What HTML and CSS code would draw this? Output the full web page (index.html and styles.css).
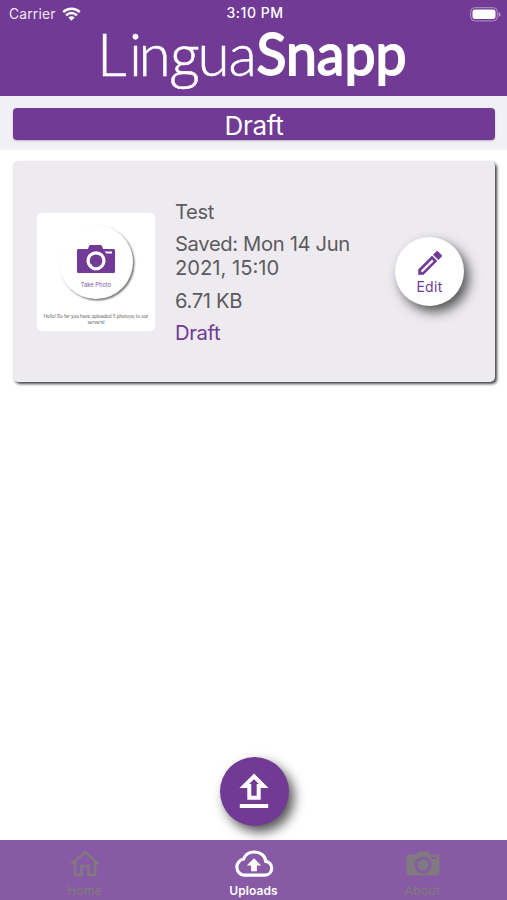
FILE: index.html
```html
<!DOCTYPE html>
<html lang="en">
<head>
<meta charset="utf-8">
<title>LinguaSnapp</title>
<link rel="stylesheet" href="styles.css">
</head>
<body>
<div class="app">
  <header class="header">
    <div class="status">
      <div class="carrier"><span>Carrier</span>
        <svg width="19" height="14" viewBox="0 0 19 14" fill="none" stroke="#fff" stroke-width="2.4"><path d="M1.2 5.1a11.8 11.8 0 0 1 16.6 0"/><path d="M4.1 8.3a7.6 7.6 0 0 1 10.8 0"/><path d="M9.5 13.7 6.4 10.6a4.4 4.4 0 0 1 6.2 0z" fill="#fff" stroke="none"/></svg>
      </div>
      <div class="time">3:10 PM</div>
      <svg class="battery" width="31" height="15" viewBox="0 0 31 15"><rect x=".7" y=".7" width="26.6" height="13.2" rx="4" fill="none" stroke="#b394c8"/><rect x="2.5" y="2.6" width="23" height="9.4" rx="2.2" fill="#fff"/><path d="M28.7 5v5q2-.8 2-2.500t-2-2.500z" fill="#b394c8"/></svg>
    </div>
    <svg class="logo" width="507" height="68" viewBox="0 28 507 68" fill="#fff">
      <text class="light" y="75.500"><tspan x="97">L</tspan><tspan x="129">i</tspan><tspan x="138.500">n</tspan><tspan class="g" x="170.500">g</tspan><tspan x="197.500">u</tspan><tspan x="228.500">a</tspan></text>
      <text class="bold" x="256.500" y="75" textLength="150" lengthAdjust="spacingAndGlyphs">Snapp</text>
    </svg>
  </header>
  <div class="filter"><div class="filter-button">Draft</div></div>
  <main class="content">
    <article class="card">
      <div class="thumb">
        <div class="thumb-circle">
          <svg width="38" height="28" viewBox="0 0 38 28"><path fill="#713a96" d="M1.500 4H11l1-3q.4-1 1.500-1h10q1.100 0 1.500 1l1 3h10.500q1.500 0 1.500 1.500v21q0 1.500-1.500 1.500h-35Q0 28 0 26.500v-21Q0 4 1.500 4z"/><circle cx="19" cy="15.800" r="8" fill="none" stroke="#fff" stroke-width="3.200"/><path d="M27.500 6.600h7.500v2h-5.500z" fill="#fff"/><path d="m12.500 19 2 3.500.6-3z" fill="#fff"/></svg>
          <span>Take Photo</span>
        </div>
        <p>Hello! So far you have uploaded 5 photo(s) to our<br>servers!</p>
      </div>
      <div class="details">
        <div>Test</div>
        <div>Saved: Mon 14 Jun<br><span class="year">2021, 15:10</span></div>
        <div>6.71 KB</div>
        <div class="state">Draft</div>
      </div>
      <div class="round edit">
        <svg width="24" height="24" viewBox="0 0 24 24" fill="#713a96" stroke="#713a96" stroke-width=".6"><path fill-rule="evenodd" d="M.5 18.500v5h5L19 10l-5-5zm4.300 2.800H2.900v-1.900L14 8.300l1.900 1.900zM23.300 5.700q.9-.9 0-1.800L20.100.7q-.9-.9-1.800 0l-3 3 5 5z"/></svg>
        <span>Edit</span>
      </div>
    </article>
    <div class="round upload">
      <svg width="30" height="36" viewBox="0 0 30 36"><path d="M15 3.300 5.300 13H10.300v11.700h9.400V13h5z" fill="none" stroke="#fff" stroke-width="4"/><path d="M.8 31h28.400v4H.8z" fill="#fff"/></svg>
    </div>
  </main>
  <nav class="tabs">
    <div class="tab"><svg width="30" height="28" viewBox="0 0 30 28" fill="none" stroke="#80797f" stroke-width="2.700"><path d="M1 14.500 15 2l14 12.500M5 12v13h6.500v-9h7v9H25V12"/></svg><span>Home</span></div>
    <div class="tab active"><svg width="40" height="28" viewBox="0 0 40 28"><path d="M10 25.200h21a7 7 0 0 0 .8-13.900C31.200 5.800 26.400 2 20 2c-5 0-8.800 2.900-10.400 7A8.200 8.200 0 0 0 10 25.200z" fill="none" stroke="#fff" stroke-width="3.200"/><path d="m20 8.200-7.200 7.200h4.300v5.800h5.800v-5.800h4.300z" fill="#fff"/></svg><span>Uploads</span></div>
    <div class="tab"><svg width="34" height="28" viewBox="0 0 34 28"><path fill="#80797f" d="M2 4.500h8L12 1.500h10l2 3h8q1.500 0 1.500 1.500v18q0 1.500-1.500 1.500H2Q.5 25.500.5 24V6Q.5 4.500 2 4.500z"/><circle cx="17" cy="15" r="7" fill="none" stroke="#8859a4" stroke-width="2.700"/><path d="M25 7h6v1.800h-5z" fill="#8859a4"/></svg><span>About</span></div>
  </nav>
</div>
</body>
</html>
```

FILE: styles.css
```css
* { box-sizing: border-box; }
body { margin: 0; background: #fff; font-family: Inter, "Liberation Sans", sans-serif; }
svg { display: block; flex: none; }
.app { width: 507px; height: 900px; display: flex; flex-direction: column; overflow: hidden; }
.header { height: 96px; background: #713a94; color: #fff; flex: none; }
.status { height: 28px; display: grid; grid-template-columns: 1fr auto 1fr; align-items: center; padding: 0 6px 0 9px; font-size: 13.8px; }
.carrier { display: flex; align-items: center; gap: 6px; color: #f0e8f5; letter-spacing: .2px; }
.time { font-weight: 500; font-size: 14px; line-height: 16px; letter-spacing: .5px; margin-top: -2px; }
.battery { justify-self: end; }
.logo { overflow: visible; }
.logo text { font-family: Lato, sans-serif; stroke: #fff; }
.logo .light { font-weight: 300; font-size: 58.5px; stroke-width: .5px; }
.logo .g { font-family: "Open Sans", sans-serif; font-size: 55px; }
.logo .bold { font-weight: 400; font-size: 58px; stroke-width: 1.8px; }
.filter { height: 54px; padding: 12px 12px 9px 13px; background: #f1f0f6; flex: none; }
.filter-button { height: 32px; border-radius: 4px; background: #713a94; color: #fff; text-align: center; font-size: 26px; line-height: 35px; letter-spacing: -.3px; box-shadow: 0 1px 2px #8888; }
.content { flex: 1; display: flex; flex-direction: column; align-items: center; justify-content: space-between; padding: 11px 12px 14px 13px; }
.card { width: 482px; height: 221px; border-radius: 5px; background: #eeebf0; display: flex; align-items: center; padding: 0 30px 0 24px; box-shadow: 2px 2px 3px #444; }
.thumb { width: 118px; height: 118px; border-radius: 5px; background: #fff; display: flex; flex-direction: column; align-items: center; flex: none; padding-top: 12px; }
.thumb-circle { width: 74px; height: 74px; border-radius: 50%; display: flex; flex-direction: column; align-items: center; padding-top: 20px; box-shadow: 1.5px 1.5px 2px #777; gap: 8px; flex: none; }
.thumb-circle span { font-size: 5.8px; line-height: 8px; color: #8058a0; }
.thumb p { margin: 15px 0 0; font-size: 4.5px; line-height: 6px; text-align: center; white-space: nowrap; color: #555; }
.details { width: 220px; margin-left: 20px; display: flex; flex-direction: column; gap: 8px; font-size: 20.2px; line-height: 24.3px; letter-spacing: -.35px; color: #5c5a5f; padding-top: 2px; }
.year { letter-spacing: 0; }
.state { color: #713a94; }
.round { width: 69px; height: 69px; border-radius: 50%; display: flex; flex-direction: column; align-items: center; box-shadow: 5px 6px 12px #555; flex: none; }
.edit { background: #fff; color: #713a94; padding-top: 14px; font-size: 14px; line-height: 18px; letter-spacing: .3px; gap: 3px; }
.upload { background: #713a94; padding-top: 16px; }
.tabs { height: 60px; background: #8859a4; display: grid; grid-template-columns: repeat(3, 1fr); flex: none; }
.tab { display: flex; flex-direction: column; align-items: center; padding-top: 10px; gap: 5px; color: #80797f; font-size: 12px; line-height: 16px; letter-spacing: .3px; font-weight: 500; }
.active { color: #fff; font-weight: 600; font-size: 12px; letter-spacing: .1px; }
```
